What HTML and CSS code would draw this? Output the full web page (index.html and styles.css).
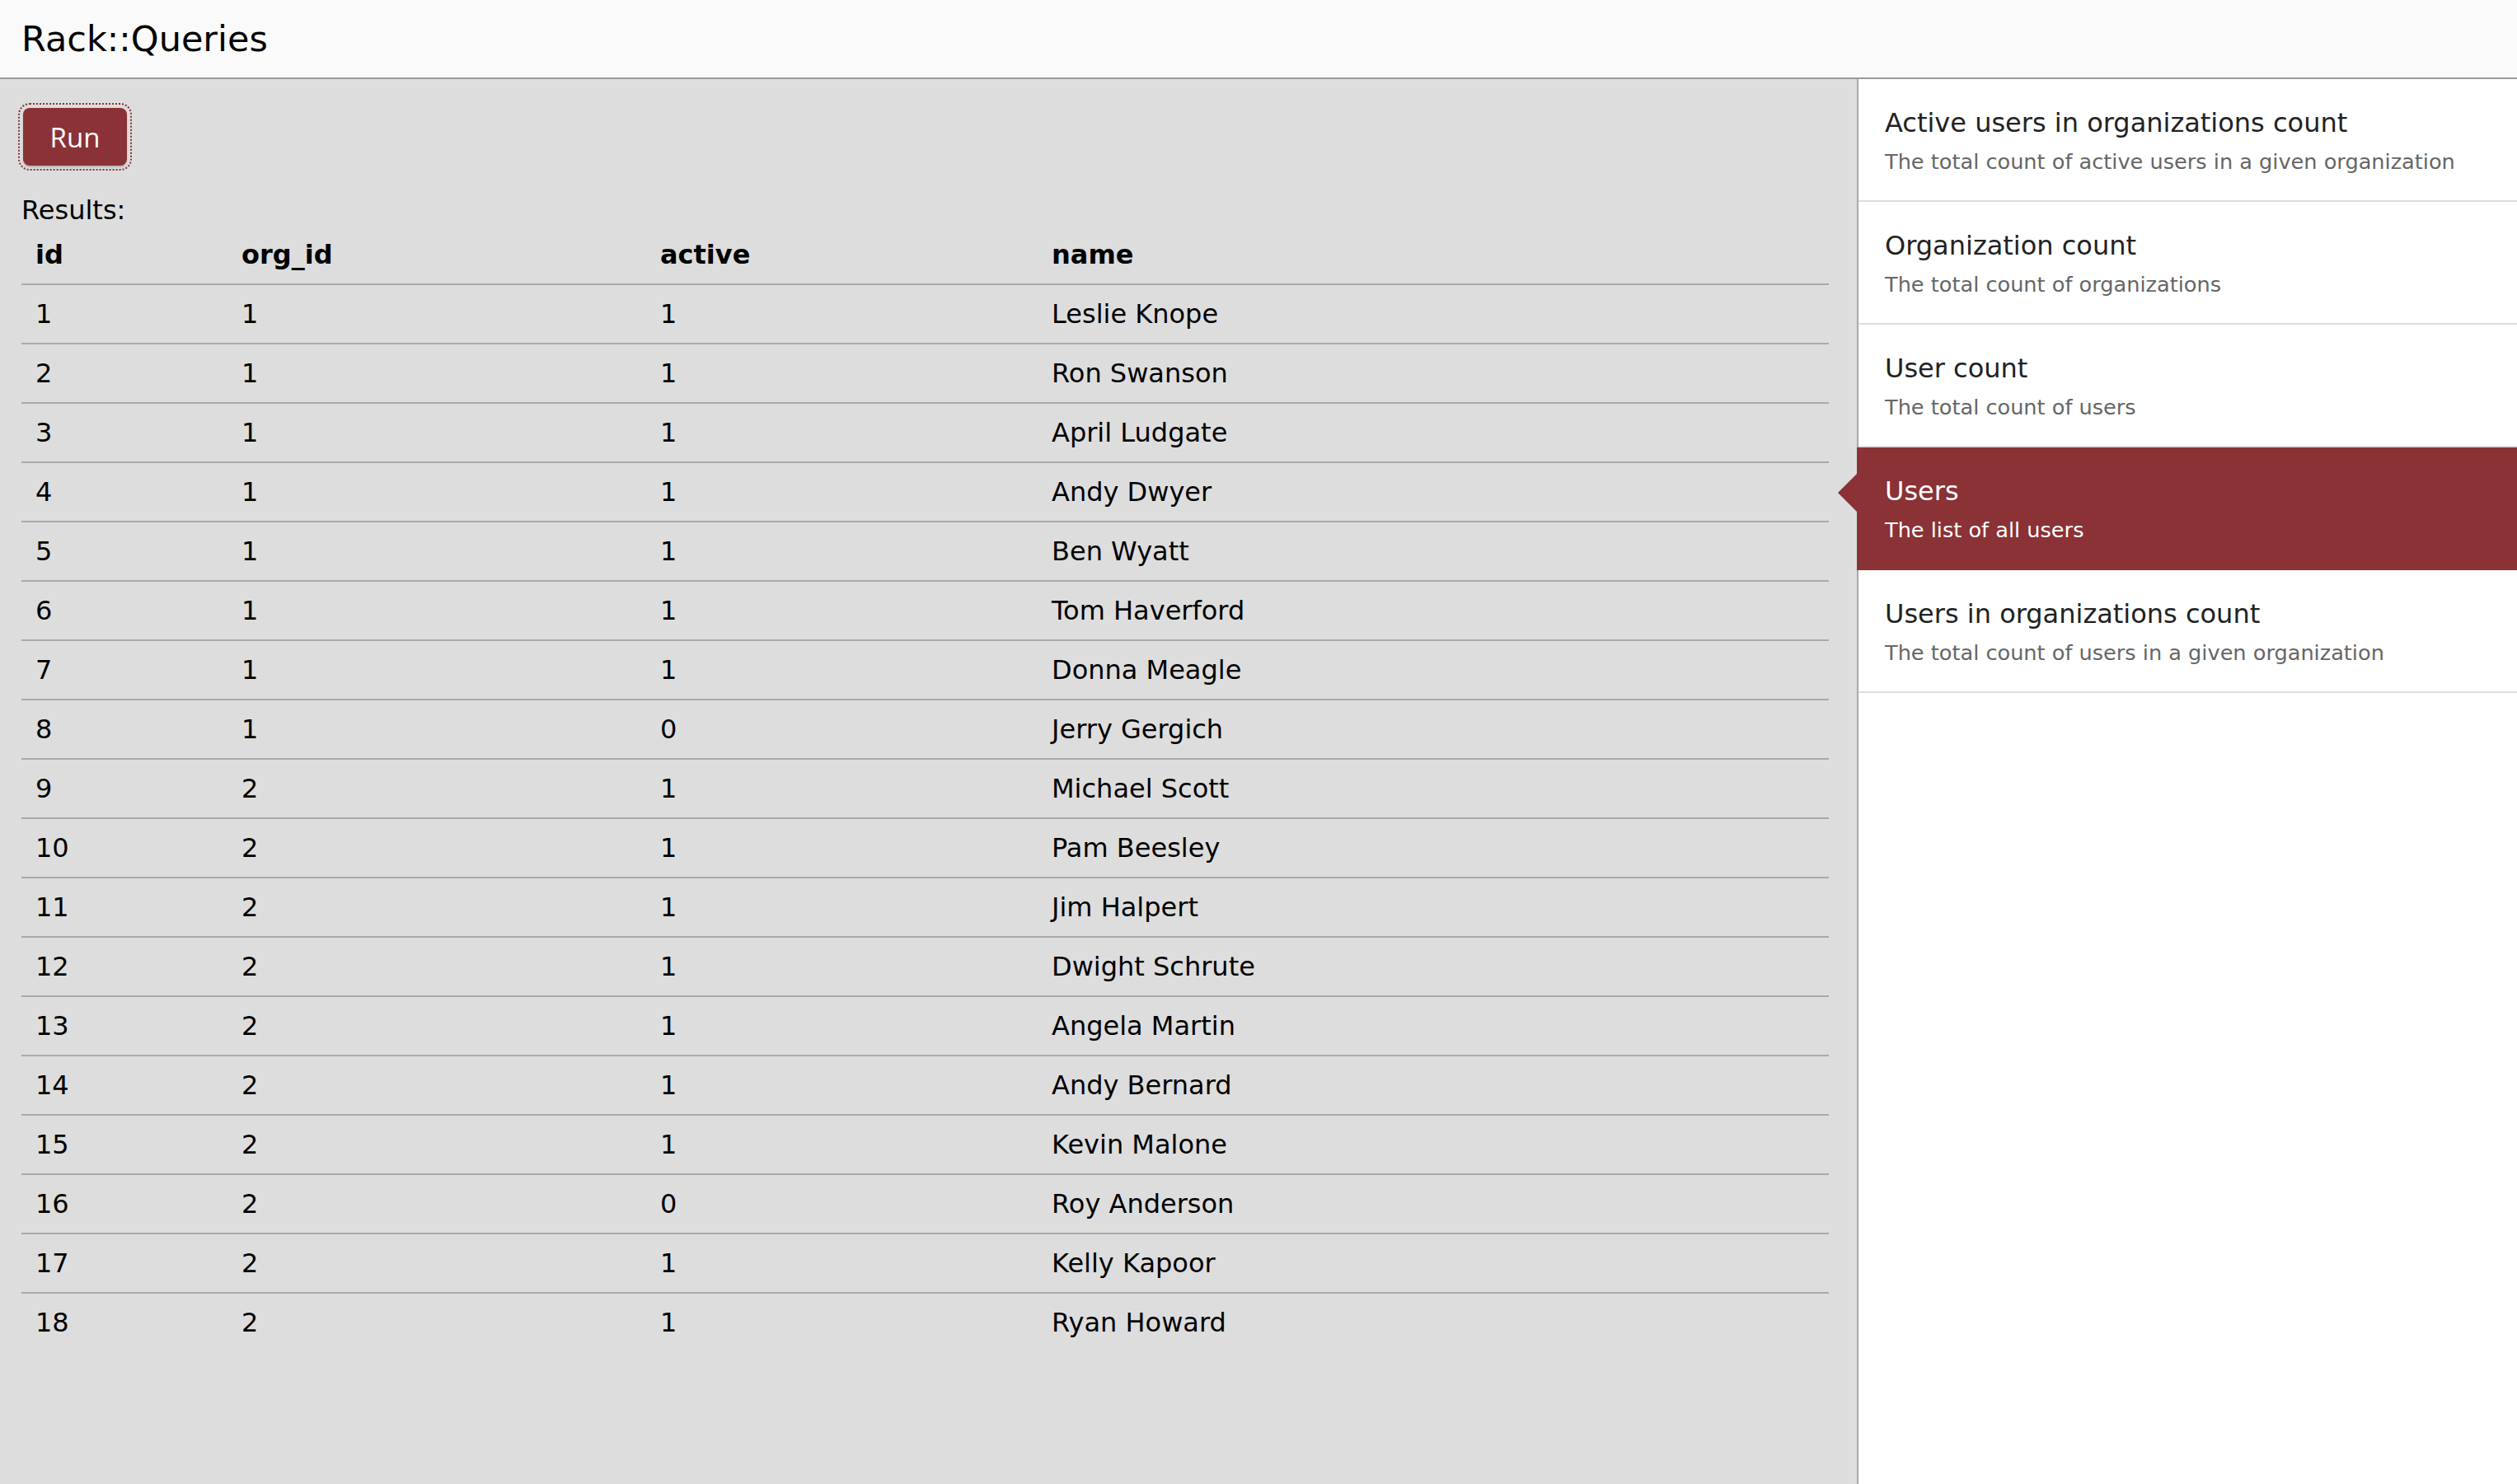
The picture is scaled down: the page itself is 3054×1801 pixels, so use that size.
FILE: index.html
```html
<!DOCTYPE html>
<html lang="en">
<head>
<meta charset="utf-8">
<title>Rack::Queries</title>
<link rel="stylesheet" href="styles.css">
</head>
<body>
<header class="topbar"><h1 class="brand">Rack::Queries</h1></header>
<div class="layout">
  <main class="content">
    <button class="run-btn" type="button">Run</button>
    <div class="results-label">Results:</div>
    <table class="results">
      <thead>
        <tr><th class="col-id">id</th><th class="col-org">org_id</th><th class="col-active">active</th><th class="col-name">name</th></tr>
      </thead>
      <tbody>
        <tr><td>1</td><td>1</td><td>1</td><td>Leslie Knope</td></tr>
        <tr><td>2</td><td>1</td><td>1</td><td>Ron Swanson</td></tr>
        <tr><td>3</td><td>1</td><td>1</td><td>April Ludgate</td></tr>
        <tr><td>4</td><td>1</td><td>1</td><td>Andy Dwyer</td></tr>
        <tr><td>5</td><td>1</td><td>1</td><td>Ben Wyatt</td></tr>
        <tr><td>6</td><td>1</td><td>1</td><td>Tom Haverford</td></tr>
        <tr><td>7</td><td>1</td><td>1</td><td>Donna Meagle</td></tr>
        <tr><td>8</td><td>1</td><td>0</td><td>Jerry Gergich</td></tr>
        <tr><td>9</td><td>2</td><td>1</td><td>Michael Scott</td></tr>
        <tr><td>10</td><td>2</td><td>1</td><td>Pam Beesley</td></tr>
        <tr><td>11</td><td>2</td><td>1</td><td>Jim Halpert</td></tr>
        <tr><td>12</td><td>2</td><td>1</td><td>Dwight Schrute</td></tr>
        <tr><td>13</td><td>2</td><td>1</td><td>Angela Martin</td></tr>
        <tr><td>14</td><td>2</td><td>1</td><td>Andy Bernard</td></tr>
        <tr><td>15</td><td>2</td><td>1</td><td>Kevin Malone</td></tr>
        <tr><td>16</td><td>2</td><td>0</td><td>Roy Anderson</td></tr>
        <tr><td>17</td><td>2</td><td>1</td><td>Kelly Kapoor</td></tr>
        <tr><td>18</td><td>2</td><td>1</td><td>Ryan Howard</td></tr>
      </tbody>
    </table>
  </main>
  <nav class="sidebar">
    <div class="query">
      <div class="query-name">Active users in organizations count</div>
      <div class="query-desc">The total count of active users in a given organization</div>
    </div>
    <div class="query">
      <div class="query-name">Organization count</div>
      <div class="query-desc">The total count of organizations</div>
    </div>
    <div class="query">
      <div class="query-name">User count</div>
      <div class="query-desc">The total count of users</div>
    </div>
    <div class="query query-active">
      <div class="query-name">Users</div>
      <div class="query-desc">The list of all users</div>
    </div>
    <div class="query">
      <div class="query-name">Users in organizations count</div>
      <div class="query-desc">The total count of users in a given organization</div>
    </div>
  </nav>
</div>
</body>
</html>
```

FILE: styles.css
```css
html, body {
  margin: 0;
  padding: 0;
  height: 100%;
}

body {
  font-family: "DejaVu Sans", Verdana, sans-serif;
  color: #000;
  background: #dddddd;
  display: flex;
  flex-direction: column;
  min-height: 100vh;
}

.topbar {
  height: 94px;
  background: #fafafa;
  border-bottom: 2px solid #999;
  display: flex;
  align-items: center;
  padding-left: 26px;
  flex-shrink: 0;
}

.brand {
  margin: 0;
  font-size: 43px;
  font-weight: normal;
  color: #000;
  line-height: 1;
}

.layout {
  flex: 1;
  display: flex;
}

.content {
  flex: 1;
  background: #dddddd;
  padding: 35px 34px 0 26px;
}

.run-btn {
  display: block;
  margin-left: 2px;
  width: 126px;
  height: 70px;
  background: #8a3236;
  color: #fff;
  border: none;
  border-radius: 8px;
  font-family: "Open Sans", "Noto Sans", sans-serif;
  font-size: 33px;
  padding: 0;
  box-shadow: 0 2px 2px rgba(0, 0, 0, 0.18);
  outline: 2px dotted #8a3236;
  outline-offset: 4px;
}

.results-label {
  margin-top: 35px;
  font-size: 32px;
  line-height: 38px;
}

.results {
  width: 100%;
  border-collapse: separate;
  border-spacing: 0;
  font-size: 32px;
}

.results th,
.results td {
  text-align: left;
  padding: 16px 17px;
  line-height: 38px;
  vertical-align: middle;
}

.results th {
  font-weight: bold;
}

.results td {
  border-top: 2px solid #aaa;
}

.col-id { width: 216px; }
.col-org { width: 474px; }
.col-active { width: 441px; }

.sidebar {
  width: 799px;
  flex-shrink: 0;
  background: #fff;
  border-left: 2px solid #aaa;
}

.query {
  position: relative;
  padding: 34px 32px 32px 32px;
  border-bottom: 2px solid #ddd;
}

.query-name {
  font-size: 32px;
  line-height: 38px;
  color: #222;
}

.query-desc {
  margin-top: 13px;
  font-size: 25.6px;
  line-height: 30px;
  color: #666;
}

.query-active {
  background: #8a3236;
  border-bottom-color: #8a3236;
  margin-left: -2px;
  padding-left: 34px;
}

.query-active .query-name,
.query-active .query-desc {
  color: #fff;
}

.query-active::before {
  content: "";
  position: absolute;
  left: -23px;
  top: 32px;
  border-right: 23px solid #8a3236;
  border-top: 23px solid transparent;
  border-bottom: 23px solid transparent;
}
```
